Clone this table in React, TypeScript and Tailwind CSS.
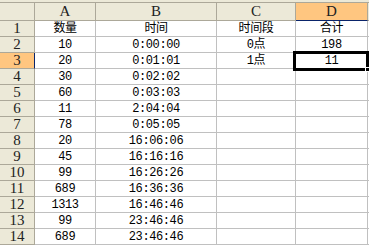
const rows: string[][] = [
  ["数量", "时间", "时间段", "合计"],
  ["10", "0:00:00", "0点", "198"],
  ["20", "0:01:01", "1点", "11"],
  ["30", "0:02:02", "", ""],
  ["60", "0:03:03", "", ""],
  ["11", "2:04:04", "", ""],
  ["78", "0:05:05", "", ""],
  ["20", "16:06:06", "", ""],
  ["45", "16:16:16", "", ""],
  ["99", "16:26:26", "", ""],
  ["689", "16:36:36", "", ""],
  ["1313", "16:46:46", "", ""],
  ["99", "23:46:46", "", ""],
  ["689", "23:46:46", "", ""],
];

const cols = ["A", "B", "C", "D"];

export default function App() {
  return (
    <div className="relative w-[369px] h-[246px] overflow-hidden bg-white select-none">
      {/* top strip above the column headers */}
      <div className="h-[3px] bg-[#ece9d8] border-b border-[#aca899]" />

      <div className="grid grid-cols-[35px_61px_121px_79px_72px_1fr]">
        {/* header row */}
        <div className="h-[18px] bg-[#ece9d8] border-r border-b border-[#aca899]" />
        {cols.map((c) => (
          <div
            key={c}
            className={
              c === "D"
                ? "h-[18px] flex items-center justify-center bg-[#ffc680] border-r border-[#aca899] border-b border-b-[#0a246a] font-['Liberation_Serif',serif] text-[15px] text-[#222]"
                : "h-[18px] flex items-center justify-center bg-[#ece9d8] border-r border-b border-[#aca899] font-['Liberation_Serif',serif] text-[15px] text-[#222]"
            }
          >
            {c}
          </div>
        ))}
        <div className="h-[18px] bg-[#ece9d8] border-b border-[#aca899]" />

        {/* data rows */}
        {rows.map((r, i) => (
          <Row key={i} n={i + 1} cells={r} selected={i === 2} />
        ))}
      </div>

      {/* active cell D3 */}
      <div className="absolute left-[293px] top-[51px] w-[76px] h-[20px] border-[3px] border-black pointer-events-none" />
      <div className="absolute left-[365px] top-[67px] w-[5px] h-[5px] bg-black border border-white pointer-events-none" />
    </div>
  );
}

function Row({ n, cells, selected }: { n: number; cells: string[]; selected: boolean }) {
  return (
    <>
      <div
        className={
          selected
            ? "h-4 flex items-center justify-center bg-[#ffc680] border-b border-[#aca899] border-r border-r-[#0a246a] font-['Liberation_Serif',serif] text-[15px] leading-none text-[#222]"
            : "h-4 flex items-center justify-center bg-[#ece9d8] border-r border-b border-[#aca899] font-['Liberation_Serif',serif] text-[15px] leading-none text-[#222]"
        }
      >
        {n}
      </div>
      {cells.map((c, j) => (
        <div
          key={j}
          className="h-4 flex items-center justify-center border-r border-b border-[#c0c0c0] font-['Liberation_Mono','Noto_Sans_CJK_SC',monospace] text-[12px] tracking-[-0.4px] leading-none text-black whitespace-nowrap"
        >
          {c}
        </div>
      ))}
      <div className="h-4 border-b border-[#c0c0c0]" />
    </>
  );
}
